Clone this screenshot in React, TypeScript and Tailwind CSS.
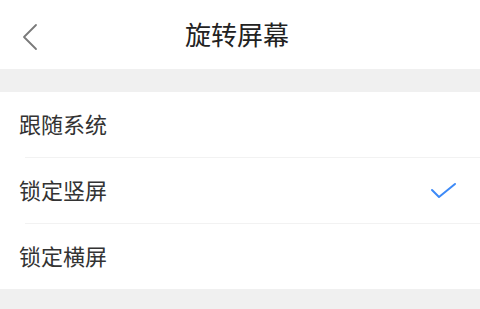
import React from "react";

const rows = [
  { label: "跟随系统", checked: false },
  { label: "锁定竖屏", checked: true },
  { label: "锁定横屏", checked: false },
];

export default function App() {
  return (
    <div
      className="w-[480px] h-[309px] bg-[#f0f0f0] overflow-hidden"
      style={{ fontFamily: '"Noto Sans CJK SC", "Noto Sans", sans-serif' }}
    >
      <div className="relative h-[69px] bg-white flex items-center justify-center">
        <svg
          className="absolute left-[20px] top-[23px]"
          width="20"
          height="28"
          viewBox="0 0 20 28"
          fill="none"
        >
          <path d="M16 2 L4 14 L16 26" stroke="#7a7a7a" strokeWidth="1.8" strokeLinecap="round" strokeLinejoin="round" />
        </svg>
        <span className="text-[26px] leading-none text-[#222] ml-[-6px] mt-[-1px]">旋转屏幕</span>
      </div>
      <div className="h-[23px]" />
      <div className="bg-white">
        {rows.map((r, i) => (
          <div key={r.label}>
            {i > 0 && <div className="ml-[25px] h-px bg-[#f2f2f2]" />}
            <div className="h-[65px] flex items-center justify-between pl-[19px] pr-[22px]">
              <span className="text-[22px] leading-none text-[#333] mt-[-3px]">{r.label}</span>
              {r.checked && (
                <svg width="28" height="18" viewBox="0 0 28 18" fill="none">
                  <path d="M2 8 L9 15 L25 2" stroke="#3d8af7" strokeWidth="2" strokeLinecap="round" strokeLinejoin="round" />
                </svg>
              )}
            </div>
          </div>
        ))}
      </div>
    </div>
  );
}
